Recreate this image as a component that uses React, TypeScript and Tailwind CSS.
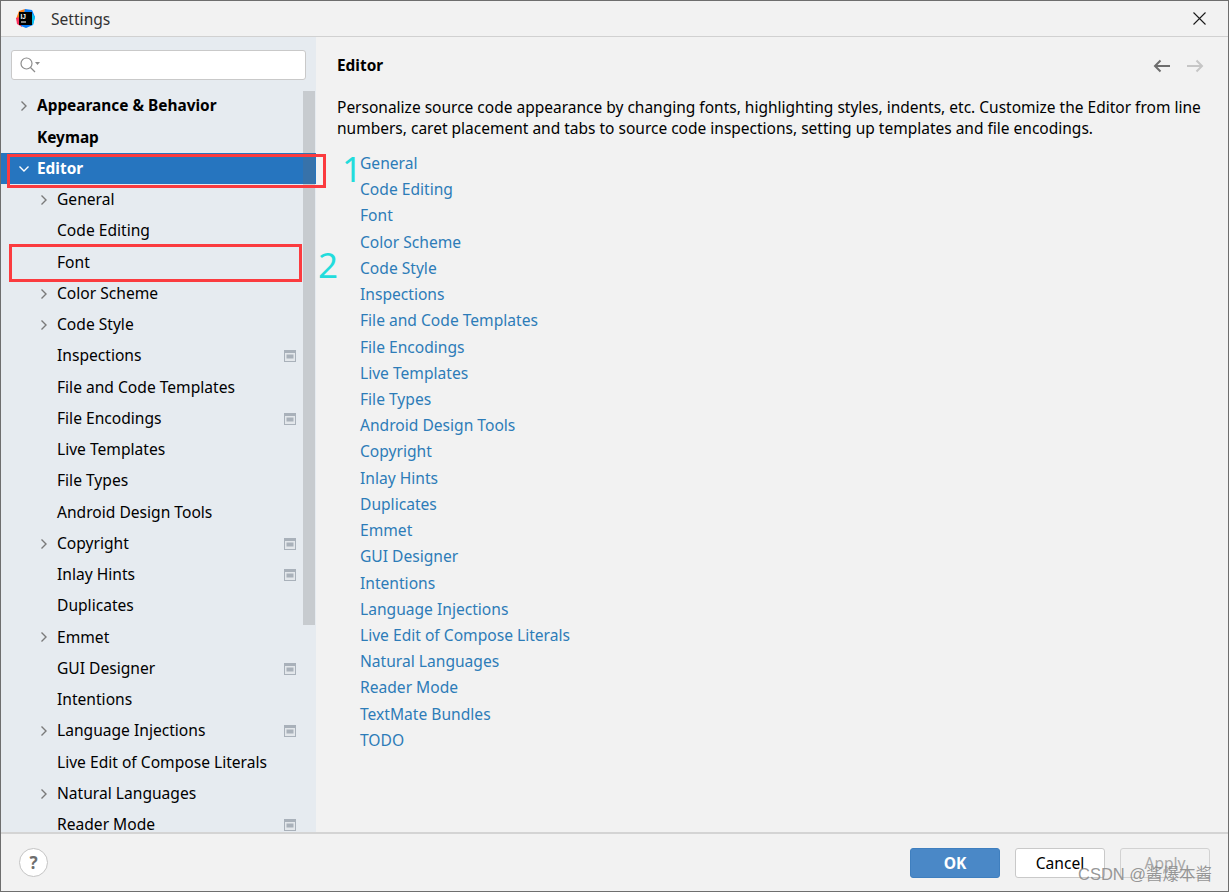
import React from "react";

type Row = { label: string; depth: number; chevron?: "right" | "down"; badge?: boolean; bold?: boolean; selected?: boolean };

const rows: Row[] = [
  { label: "Appearance & Behavior", depth: 0, chevron: "right", bold: true },
  { label: "Keymap", depth: 0, bold: true },
  { label: "Editor", depth: 0, chevron: "down", bold: true, selected: true },
  { label: "General", depth: 1, chevron: "right" },
  { label: "Code Editing", depth: 1 },
  { label: "Font", depth: 1 },
  { label: "Color Scheme", depth: 1, chevron: "right" },
  { label: "Code Style", depth: 1, chevron: "right" },
  { label: "Inspections", depth: 1, badge: true },
  { label: "File and Code Templates", depth: 1 },
  { label: "File Encodings", depth: 1, badge: true },
  { label: "Live Templates", depth: 1 },
  { label: "File Types", depth: 1 },
  { label: "Android Design Tools", depth: 1 },
  { label: "Copyright", depth: 1, chevron: "right", badge: true },
  { label: "Inlay Hints", depth: 1, badge: true },
  { label: "Duplicates", depth: 1 },
  { label: "Emmet", depth: 1, chevron: "right" },
  { label: "GUI Designer", depth: 1, badge: true },
  { label: "Intentions", depth: 1 },
  { label: "Language Injections", depth: 1, chevron: "right", badge: true },
  { label: "Live Edit of Compose Literals", depth: 1 },
  { label: "Natural Languages", depth: 1, chevron: "right" },
  { label: "Reader Mode", depth: 1, badge: true },
];

const links = [
  "General", "Code Editing", "Font", "Color Scheme", "Code Style", "Inspections", "File and Code Templates",
  "File Encodings", "Live Templates", "File Types", "Android Design Tools", "Copyright", "Inlay Hints",
  "Duplicates", "Emmet", "GUI Designer", "Intentions", "Language Injections", "Live Edit of Compose Literals",
  "Natural Languages", "Reader Mode", "TextMate Bundles", "TODO",
];

function Chevron({ dir, white }: { dir: "right" | "down"; white?: boolean }) {
  return (
    <svg width="12" height="12" viewBox="0 0 12 12" fill="none" stroke={white ? "#ffffff" : "#7a7a7a"} strokeWidth="1.4">
      {dir === "right" ? <path d="M3.5 1.5 L8 6 L3.5 10.5" /> : <path d="M1.5 3.5 L6 8 L10.5 3.5" />}
    </svg>
  );
}

function Badge() {
  return (
    <svg width="12" height="12" viewBox="0 0 12 12" className="shrink-0">
      <rect x="0.5" y="0.5" width="11" height="11" fill="#e3e7eb" stroke="#a9b1ba" />
      <rect x="0.5" y="0.5" width="11" height="2.5" fill="#a9b1ba" />
      <rect x="2.5" y="4.5" width="7" height="4" fill="#a9b1ba" />
    </svg>
  );
}

function TreeRow({ r }: { r: Row }) {
  return (
    <div className={`flex h-[31.25px] shrink-0 items-center pr-[20px] ${r.selected ? "bg-[#2675bf] text-white" : "text-black"} ${r.depth === 0 ? "pl-[17px]" : "pl-[37px]"}`}>
      <span className="flex w-[19px] shrink-0 items-center">
        {r.chevron && <Chevron dir={r.chevron} white={r.selected} />}
      </span>
      <span className={`flex-1 whitespace-nowrap ${r.bold ? "font-bold text-[15.4px]" : "text-[15.6px]"}`}>{r.label}</span>
      {r.badge && <Badge />}
    </div>
  );
}

export default function App() {
  return (
    <div className="relative flex h-[892px] w-[1229px] flex-col overflow-hidden border border-[#6e6e6e] bg-[#f2f2f2] text-[15.6px] font-['Noto_Sans',sans-serif] text-black">
      <header className="flex h-[36px] shrink-0 items-center border-b border-[#d1d1d1] pl-[14px] pr-[22px]">
        <svg width="21" height="21" viewBox="0 0 21 21" className="shrink-0">
          <path d="M4 3 L10 1 L9 10 L1 11 Z" fill="#fc801d" />
          <path d="M1 10 L8 8 L7 19 L2 16 Z" fill="#fe315d" />
          <path d="M10 1 L17 2 L20 9 L18 17 L11 20 L6 18 Z" fill="#087cfa" />
          <path d="M15 3 L20 9 L18 17 L13 14 Z" fill="#07c3f2" />
          <rect x="4" y="4" width="13" height="13" fill="#000000" />
          <rect x="6" y="13.5" width="5" height="1" fill="#ffffff" />
          <text x="5.5" y="10.5" fontSize="6.5" fontWeight="700" fill="#ffffff" fontFamily="Liberation Sans, sans-serif">IJ</text>
        </svg>
        <span className="ml-[15px] flex-1 pt-[2px] text-[#333333]">Settings</span>
        <svg width="13" height="13" viewBox="0 0 13 13" stroke="#1a1a1a" strokeWidth="1.1">
          <path d="M0.5 0.5 L12.5 12.5 M12.5 0.5 L0.5 12.5" />
        </svg>
      </header>

      <div className="flex min-h-0 flex-1">
        <aside className="relative flex w-[315px] shrink-0 flex-col overflow-hidden bg-[#e6ebf0]">
          <div className="shrink-0 pl-[10px] pr-[10px] pt-[13px]">
            <div className="flex h-[30px] items-center rounded-[3px] border border-[#c9c9c9] bg-white pl-[7px]">
              <svg width="22" height="18" viewBox="0 0 22 18" fill="none" stroke="#8c8c8c" strokeWidth="1.2">
                <circle cx="7.5" cy="7.5" r="5.5" />
                <path d="M11.5 11.5 L16 16" />
                <path d="M16 6 h5 l-2.5 3 Z" fill="#8c8c8c" stroke="none" />
              </svg>
            </div>
          </div>
          <div className="mt-[10.4px] flex flex-col">
            {rows.map((r) => (
              <TreeRow key={r.label} r={r} />
            ))}
          </div>
          <div className="absolute left-[302px] top-[54px] h-[534px] w-[12px] bg-[#6b6b6b]/25" />
        </aside>

        <main className="min-w-0 flex-1 pl-[21px] pr-[20px] pt-[17px]">
          <div className="flex h-[24px] items-center justify-between">
            <h1 className="text-[15.4px] font-bold">Editor</h1>
            <div className="flex items-center gap-[17px] pr-[4px]">
              <svg width="17" height="14" viewBox="0 0 17 14" fill="none" stroke="#6e6e6e" strokeWidth="2">
                <path d="M17 7 H2 M7.5 1.5 L2 7 L7.5 12.5" />
              </svg>
              <svg width="17" height="14" viewBox="0 0 17 14" fill="none" stroke="#c6c6c6" strokeWidth="2">
                <path d="M0 7 H15 M9.5 1.5 L15 7 L9.5 12.5" />
              </svg>
            </div>
          </div>
          <p className="mt-[19px] whitespace-nowrap text-[15.5px] leading-[21px]">
            Personalize source code appearance by changing fonts, highlighting styles, indents, etc. Customize the Editor from line
            <br />
            numbers, caret placement and tabs to source code inspections, setting up templates and file encodings.
          </p>
          <ul className="mt-[11.6px] flex flex-col pl-[23px] text-[#2d7cb8]">
            {links.map((l) => (
              <li key={l} className="flex h-[26.23px] items-center whitespace-nowrap">{l}</li>
            ))}
          </ul>
        </main>
      </div>

      <footer className="flex h-[59px] shrink-0 items-center justify-between border-t-2 border-[#d4d4d4] pl-[18px] pr-[18px]">
        <div className="flex h-[29px] w-[29px] items-center justify-center rounded-full border border-[#c4c4c4] bg-white text-[17px] font-bold text-[#6e6e6e]">?</div>
        <div className="flex items-center gap-[15px]">
          <button className="flex h-[30px] w-[90px] items-center justify-center rounded-[3px] border border-[#3f7fbf] bg-[#4a88c7] pt-[2px] font-bold text-white">OK</button>
          <button className="flex h-[30px] w-[90px] items-center justify-center rounded-[3px] border border-[#c9c9c9] bg-white pt-[2px]">Cancel</button>
          <button className="flex h-[30px] w-[90px] items-center justify-center rounded-[3px] border border-[#d2d2d2] pt-[2px] text-[#a8a8a8]">Apply</button>
        </div>
      </footer>

      <div className="absolute left-[6px] top-[153px] h-[34px] w-[319px] border-[3px] border-[#fb3b3f]" />
      <div className="absolute left-[8px] top-[243px] h-[38px] w-[293px] border-[3px] border-[#fb3b3f]" />
      <span className="absolute left-[341px] top-[146px] text-[35px] leading-[44px] text-[#22dcdc]">1</span>
      <span className="absolute left-[317px] top-[242px] text-[35px] leading-[44px] text-[#22dcdc]">2</span>
      <span className="absolute left-[1077px] top-[862px] whitespace-nowrap font-['Liberation_Sans','Noto_Sans_CJK_SC',sans-serif] text-[16.5px] leading-[22px] text-[#8a8a8a]/90">CSDN @酱爆本酱</span>
    </div>
  );
}
